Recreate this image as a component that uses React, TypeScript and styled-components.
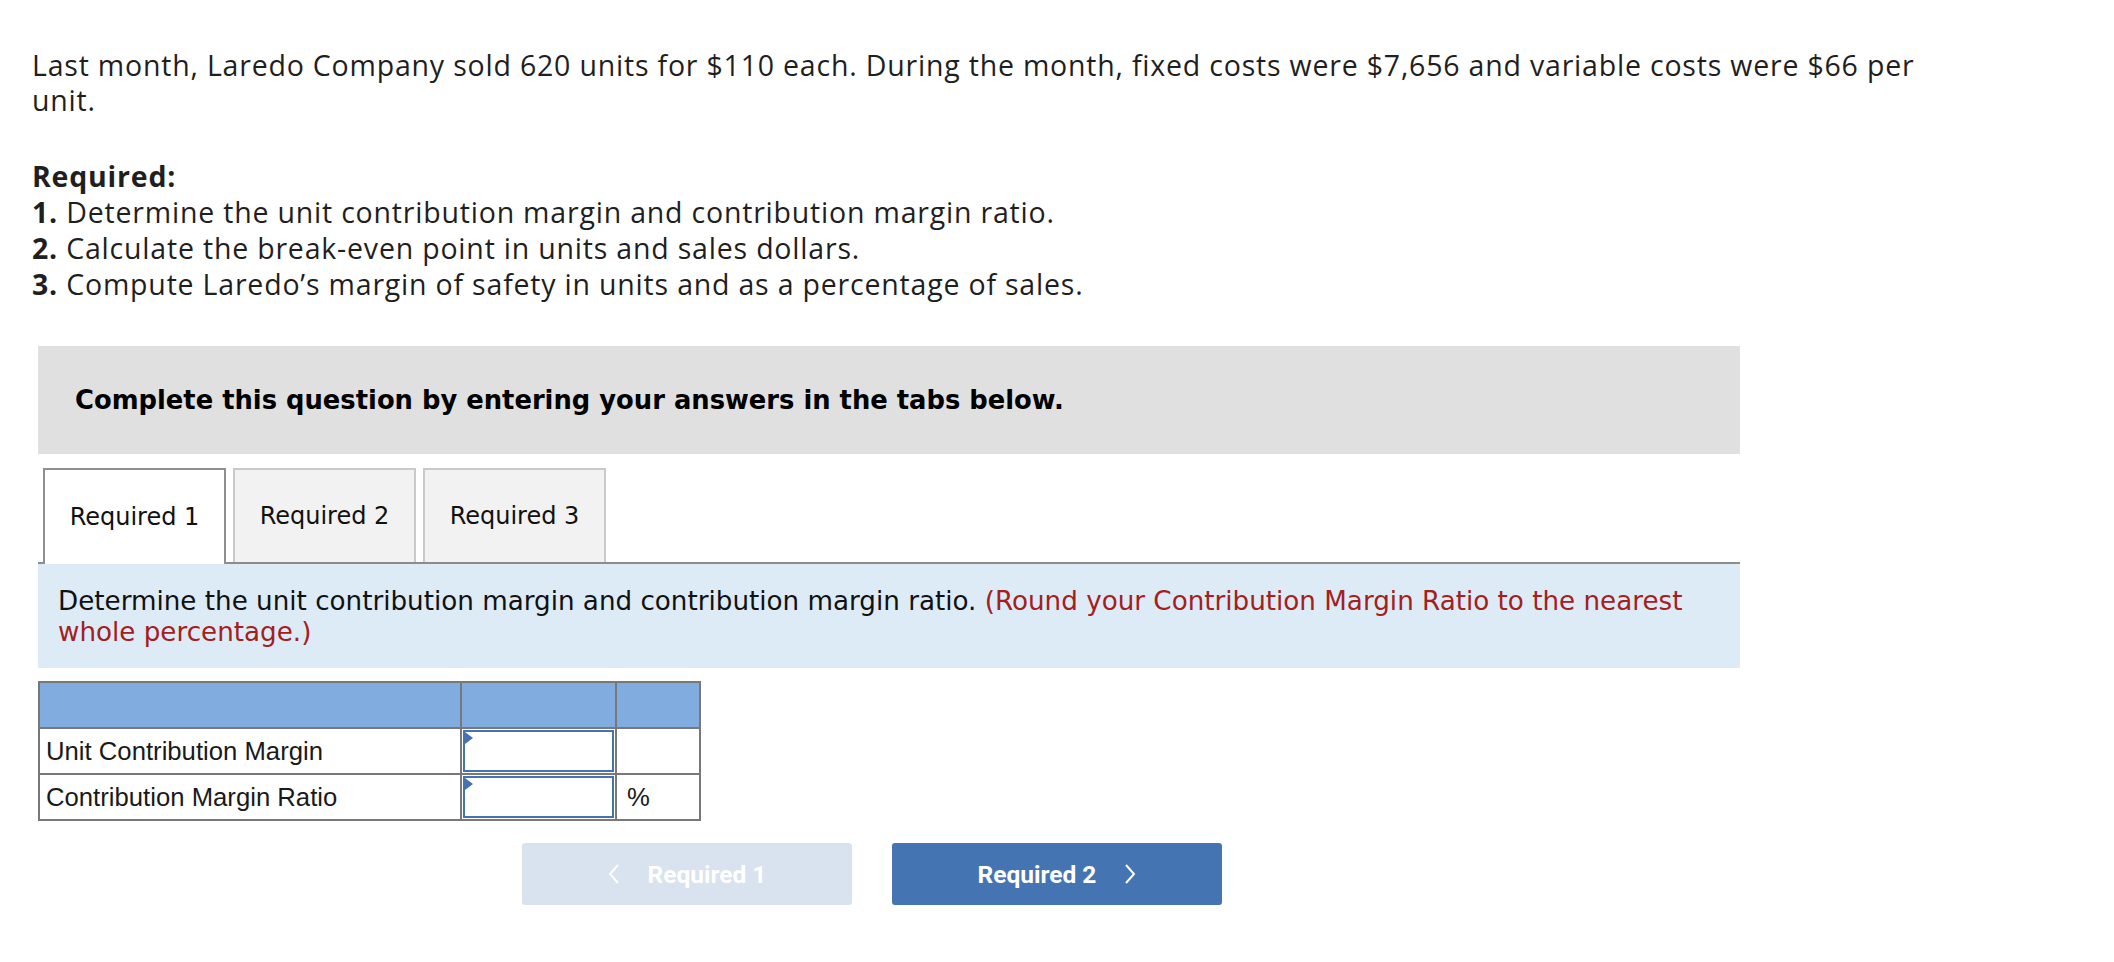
import styled, { createGlobalStyle } from "styled-components"

const GlobalStyle = createGlobalStyle`
  html, body {
    margin: 0;
    padding: 0;
    background: #fff;
  }
`

const Page = styled.div`
  padding: 48px 0 40px 32px;
`

const Question = styled.div`
  width: 1910px;
  font-family: "Open Sans", Lato, sans-serif;
  font-size: 28.5px;
  letter-spacing: 0.8px;
  line-height: 35px;
  color: #1f1f1f;
`

const Intro = styled.p`
  margin: 0 0 40px 0;
`

const RequiredList = styled.div`
  line-height: 36px;

  strong {
    font-weight: 700;
  }
`

const Work = styled.div`
  margin: 44px 0 0 6px;
  width: 1702px;
  font-family: "DejaVu Sans", Verdana, sans-serif;
`

const Banner = styled.div`
  height: 108px;
  background: #e0e0e0;
  display: flex;
  align-items: center;
  padding-left: 37px;
  font-size: 25.8px;
  font-weight: 700;
  color: #000;
`

const Tabs = styled.div`
  margin-top: 14px;
  display: flex;
  gap: 7px;
  padding-left: 5px;
  border-bottom: 2px solid #8c8c8c;
`

const Tab = styled.div<{ $active?: boolean }>`
  width: 183px;
  box-sizing: border-box;
  display: flex;
  align-items: center;
  justify-content: center;
  font-size: 24px;
  color: #111;
  background: ${p => (p.$active ? "#fff" : "#f2f2f2")};
  border: 2px solid ${p => (p.$active ? "#8f8f8f" : "#c9c9c9")};
  border-bottom: none;
  margin-bottom: ${p => (p.$active ? "-2px" : "0")};
  height: ${p => (p.$active ? "96px" : "94px")};
`

const Instructions = styled.div`
  background: #ddebf7;
  padding: 22px 20px 19px 20px;
  font-size: 26.2px;
  line-height: 31px;
  color: #111;
  min-height: 104px;
  box-sizing: border-box;
`

const Note = styled.span`
  color: #a3201d;
`

const Grid = styled.table`
  margin-top: 13px;
  border-collapse: collapse;
  font-family: "Liberation Sans", Arial, sans-serif;
  font-size: 25.7px;
  color: #1a1a1a;

  td {
    border: 2px solid #787878;
    padding: 0;
    height: 44px;
  }
`

const HeadRow = styled.tr`
  td {
    background: #80acdf;
  }
`

const LabelCell = styled.td`
  width: 414px;
  padding-left: 6px !important;
`

const InputCell = styled.td`
  width: 153px;
`

const UnitCell = styled.td`
  width: 72px;
  padding-left: 10px !important;
`

const AnswerBox = styled.div`
  margin: 0 1px;
  height: 42px;
  box-sizing: border-box;
  border: 2px solid #4672b0;
  background: #fff;
  position: relative;

  &::before {
    content: "";
    position: absolute;
    left: 0;
    top: 0;
    border-left: 8px solid #4672b0;
    border-top: 6px solid transparent;
    border-bottom: 6px solid transparent;
  }
`

const Nav = styled.div`
  margin-top: 22px;
  width: 1668px;
  display: flex;
  justify-content: center;
  gap: 40px;
`

const NavButton = styled.button<{ $disabled?: boolean }>`
  width: 330px;
  height: 62px;
  border: none;
  border-radius: 3px;
  background: ${p => (p.$disabled ? "#d9e2ef" : "#4475b2")};
  color: #fff;
  font-family: Roboto, "Liberation Sans", sans-serif;
  font-weight: 700;
  font-size: 24.5px;
  display: flex;
  align-items: center;
  justify-content: center;
  gap: 28px;
  cursor: ${p => (p.$disabled ? "default" : "pointer")};
`

const Chevron = ({ dir }: { dir: "left" | "right" }) => (
  <svg width="12" height="22" viewBox="0 0 12 22" fill="none">
    <path
      d={dir === "left" ? "M10 2 L2 11 L10 20" : "M2 2 L10 11 L2 20"}
      stroke="#fff"
      strokeWidth="2"
    />
  </svg>
)

export default function App() {
  return (
    <Page>
      <GlobalStyle />
      <Question>
        <Intro>
          Last month, Laredo Company sold 620 units for $110 each. During the
          month, fixed costs were $7,656 and variable costs were $66 per unit.
        </Intro>
        <RequiredList>
          <strong>Required:</strong>
          <br />
          <strong>1.</strong> Determine the unit contribution margin and
          contribution margin ratio.
          <br />
          <strong>2.</strong> Calculate the break-even point in units and sales
          dollars.
          <br />
          <strong>3.</strong> Compute Laredo’s margin of safety in units and as a
          percentage of sales.
        </RequiredList>
      </Question>

      <Work>
        <Banner>Complete this question by entering your answers in the tabs below.</Banner>

        <Tabs>
          <Tab $active>Required 1</Tab>
          <Tab>Required 2</Tab>
          <Tab>Required 3</Tab>
        </Tabs>

        <Instructions>
          Determine the unit contribution margin and contribution margin ratio.{" "}
          <Note>(Round your Contribution Margin Ratio to the nearest whole percentage.)</Note>
        </Instructions>

        <Grid>
          <tbody>
            <HeadRow>
              <td />
              <td />
              <td />
            </HeadRow>
            <tr>
              <LabelCell>Unit Contribution Margin</LabelCell>
              <InputCell>
                <AnswerBox />
              </InputCell>
              <UnitCell />
            </tr>
            <tr>
              <LabelCell>Contribution Margin Ratio</LabelCell>
              <InputCell>
                <AnswerBox />
              </InputCell>
              <UnitCell>%</UnitCell>
            </tr>
          </tbody>
        </Grid>

        <Nav>
          <NavButton $disabled>
            <Chevron dir="left" />
            Required 1
          </NavButton>
          <NavButton>
            Required 2
            <Chevron dir="right" />
          </NavButton>
        </Nav>
      </Work>
    </Page>
  )
}
